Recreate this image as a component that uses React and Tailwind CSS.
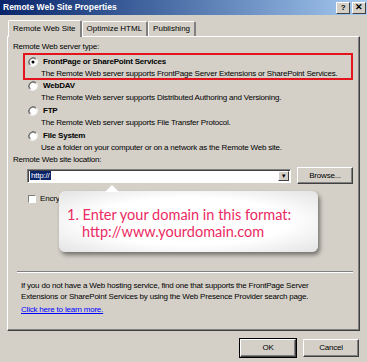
import React from 'react';

function Radio({ checked }) {
  return (
    <svg width="10" height="10" viewBox="0 0 12 12" className="shrink-0">
      <path d="M10.2 1.8 A6 6 0 0 0 1.8 10.2" fill="none" stroke="#808080" strokeWidth="1" />
      <path d="M1.8 10.2 A6 6 0 0 0 10.2 1.8" fill="none" stroke="#ffffff" strokeWidth="1" />
      <circle cx="6" cy="6" r="4.6" fill="#ffffff" />
      <path d="M9.3 2.7 A4.6 4.6 0 0 0 2.7 9.3" fill="none" stroke="#404040" strokeWidth="1" />
      {checked && <circle cx="6" cy="6" r="1.8" fill="#000" />}
    </svg>
  );
}

function Option({ label, desc, checked }) {
  return (
    <div className="flex flex-col">
      <div className="flex items-center h-[13px] gap-[5px]">
        <Radio checked={checked} />
        <span className="font-bold text-[8px]">{label}</span>
      </div>
      <div className="h-[12px] flex items-center pl-[13px] whitespace-nowrap">{desc}</div>
    </div>
  );
}

function Button({ children, isDefault }) {
  return (
    <div
      className={
        'w-[56px] h-[18px] flex items-center justify-center bg-[#d4d0c8] border border-t-white border-l-white border-r-[#404040] border-b-[#404040] shadow-[inset_-1px_-1px_0_#808080] ' +
        (isDefault ? 'outline outline-1 outline-black' : '')
      }
    >
      {children}
    </div>
  );
}

export default function App() {
  return (
    <div className="w-[367px] h-[362px] bg-[#d4d0c8] relative overflow-hidden font-['Liberation_Sans',Arial,sans-serif] text-[8px] tracking-[-0.2px] text-black leading-none">
      {/* title bar */}
      <div className="h-[15px] bg-gradient-to-r from-[#0a246a] to-[#a6caf0] flex items-center justify-between pl-[3px] pr-[1px]">
        <span className="text-white font-bold text-[8.5px] tracking-normal">Remote Web Site Properties</span>
        <div className="flex gap-[2px]">
          <div className="w-[14px] h-[12px] bg-[#d4d0c8] border border-t-white border-l-white border-r-[#404040] border-b-[#404040] flex items-center justify-center font-bold text-[8px]">?</div>
          <div className="w-[14px] h-[12px] bg-[#d4d0c8] border border-t-white border-l-white border-r-[#404040] border-b-[#404040] flex items-center justify-center font-bold text-[9px]">✕</div>
        </div>
      </div>

      {/* tabs */}
      <div className="flex items-end pl-[8px] pt-[4px] h-[21px] tracking-normal">
        <div className="h-[17px] px-[4px] flex items-center bg-[#d4d0c8] border-t border-l border-white border-r-2 border-r-[#808080] rounded-t-[2px] relative z-10 -mb-[1px]">
          Remote Web Site
        </div>
        <div className="h-[15px] px-[4px] flex items-center border-t border-l border-white border-r-2 border-r-[#808080] rounded-t-[2px]">
          Optimize HTML
        </div>
        <div className="h-[15px] px-[4px] flex items-center border-t border-l border-white border-r-2 border-r-[#808080] rounded-t-[2px]">
          Publishing
        </div>
      </div>

      {/* panel */}
      <div className="ml-[7px] w-[353px] h-[295px] border border-t-white border-l-white border-r-[#404040] border-b-[#404040] shadow-[inset_-1px_-1px_0_#808080] pl-[5px] pt-[4px] flex flex-col">
        <div className="h-[11px] flex items-center">Remote Web server type:</div>
        <div className="ml-[10px] w-[330px] h-[27px] border-2 border-[#e3141b] pl-[3px] mt-[1px]">
          <Option checked label="FrontPage or SharePoint Services" desc="The Remote Web server supports FrontPage Server Extensions or SharePoint Services." />
        </div>
        <div className="ml-[15px] mt-[-1px]">
          <Option label="WebDAV" desc="The Remote Web server supports Distributed Authoring and Versioning." />
          <Option label="FTP" desc="The Remote Web server supports File Transfer Protocol." />
          <Option label="File System" desc="Use a folder on your computer or on a network as the Remote Web site." />
        </div>
        <div className="h-[12px] flex items-center">Remote Web site location:</div>
        <div className="flex items-center mt-[1px] ml-[14px] gap-[6px]">
          <div className="w-[264px] h-[14px] bg-white border border-t-[#808080] border-l-[#808080] border-r-white border-b-white shadow-[inset_1px_1px_0_#404040] flex items-center justify-between pl-[2px] pr-[1px]">
            <span className="bg-[#0a246a] text-white px-[1px] h-[9px] flex items-center">http://</span>
            <div className="w-[11px] h-[10px] bg-[#d4d0c8] border border-t-white border-l-white border-r-[#404040] border-b-[#404040] flex items-center justify-center text-[6px]">▼</div>
          </div>
          <div className="w-[56px] h-[17px] flex items-center justify-center border border-t-white border-l-white border-r-[#404040] border-b-[#404040] shadow-[inset_-1px_-1px_0_#808080]">
            Browse...
          </div>
        </div>
        <div className="flex items-center gap-[4px] ml-[15px] mt-[10px] h-[10px]">
          <div className="w-[8px] h-[8px] bg-white border border-t-[#808080] border-l-[#808080] border-r-white border-b-white" />
          <span>Encrypt connection</span>
        </div>
        <div className="flex-1" />
        <div className="ml-[4px] w-[336px] border-t border-t-[#808080] border-b border-b-white" />
        <div className="pl-[8px] pt-[9px] pb-[16px] flex flex-col gap-[3px] whitespace-nowrap">
          <div className="h-[8px] flex items-center">If you do not have a Web hosting service, find one that supports the FrontPage Server</div>
          <div className="h-[8px] flex items-center">Extensions or SharePoint Services by using the Web Presence Provider search page.</div>
          <div className="h-[9px] flex items-center text-[#0000ff] underline mt-[1px]">Click here to learn more.</div>
        </div>
      </div>

      {/* buttons */}
      <div className="flex justify-end gap-[7px] pr-[8px] mt-[8px]">
        <Button isDefault>OK</Button>
        <Button>Cancel</Button>
      </div>

      {/* callout */}
      <div className="absolute left-[59px] top-[191px] w-[259px] h-[61px] rounded-[6px] bg-[radial-gradient(ellipse_at_center,#ffffff_55%,#e3e3e3_100%)] shadow-[2px_3px_4px_rgba(0,0,0,0.45)] flex flex-col justify-center pl-[8px] pt-[3px] tracking-normal">
        <div className="absolute -top-[6px] left-[46px] w-0 h-0 border-l-[7px] border-r-[7px] border-b-[7px] border-l-transparent border-r-transparent border-b-white" />
        <div className="font-['Lato',sans-serif] text-[14.5px] leading-[17px] text-[#ec2a63]">
          <div>1. Enter your domain in this format:</div>
          <div className="pl-[15px]">http://www.yourdomain.com</div>
        </div>
      </div>
    </div>
  );
}
